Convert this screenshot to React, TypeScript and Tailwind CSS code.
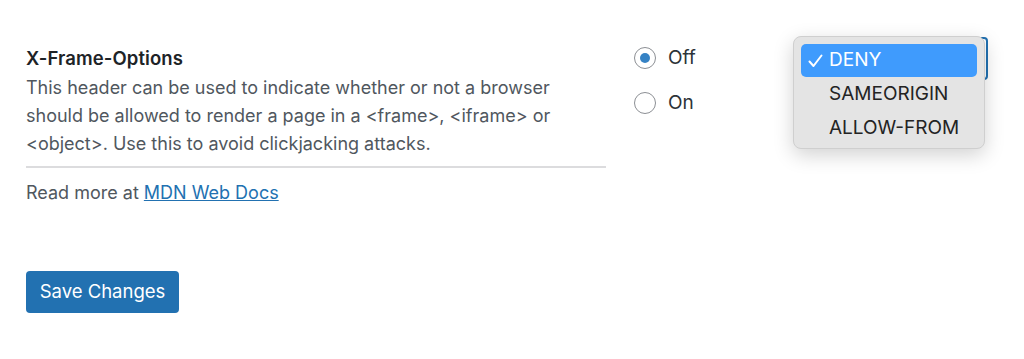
import React from "react";

export default function App() {
  const font = { fontFamily: "Inter, 'Noto Sans', Arial, sans-serif" };
  return (
    <div className="w-[1024px] h-[359px] bg-white overflow-hidden relative" style={font}>
      <div className="flex pl-[26px] pt-[46px]">
        <div className="w-[580px] flex flex-col">
          <div className="text-[18.5px] leading-[24px] font-semibold text-[#1d2327] tracking-[0.1px]">X-Frame-Options</div>
          <p className="mt-[4px] text-[18px] leading-[28px] text-[#50575e] pr-[20px]">
            This header can be used to indicate whether or not a browser should be allowed to render a page in a &lt;frame&gt;, &lt;iframe&gt; or &lt;object&gt;. Use this to avoid clickjacking attacks.
          </p>
          <div className="mt-[8px] h-[2px] bg-[#dcdcde]" />
          <p className="mt-[11px] text-[18px] leading-[28px] text-[#50575e]">
            Read more at <a className="text-[#2271b1] underline" href="#">MDN Web Docs</a>
          </p>
          <div className="mt-[64px]">
            <button className="h-[42px] w-[153px] rounded-[4px] bg-[#2271b1] text-white text-[18.5px]">Save Changes</button>
          </div>
        </div>
        <div className="ml-[28px] -mt-[35px] flex flex-col gap-[23px] pt-[36px]">
          <label className="flex items-center gap-[12px] h-[22px]">
            <span className="w-[22px] h-[22px] rounded-full border-[1.5px] border-[#8c8f94] flex items-center justify-center">
              <span className="w-[10px] h-[10px] rounded-full bg-[#3582c4]" />
            </span>
            <span className="text-[19px] text-[#2c3338]">Off</span>
          </label>
          <label className="flex items-center gap-[12px] h-[22px]">
            <span className="w-[22px] h-[22px] rounded-full border-[1.5px] border-[#8c8f94]" />
            <span className="text-[19px] text-[#2c3338]">On</span>
          </label>
        </div>
      </div>
      <div className="absolute left-[800px] top-[37px] w-[188px] h-[43px] rounded-[4px] border-2 border-[#2271b1] bg-white" />
      <div className="absolute left-[793px] top-[36px] w-[192px] h-[113px] rounded-[8px] bg-[#e4e4e4] border border-[#cfcfcf] shadow-[0_6px_20px_rgba(0,0,0,0.18)] px-[7px] pt-[7px]">
        <div className="h-[33px] rounded-[5px] bg-[#3f9bfd] flex items-center text-white text-[19px]">
          <span className="w-[28px] pl-[7px] flex items-center">
            <svg width="15" height="14" viewBox="0 0 15 14" fill="none">
              <path d="M1.5 7.5 L5.5 12 L13.5 1.5" stroke="white" strokeWidth="2" strokeLinecap="round" strokeLinejoin="round" />
            </svg>
          </span>
          <span>DENY</span>
        </div>
        <div className="h-[34px] flex items-center pl-[28px] text-[19px] text-[#232323]">SAMEORIGIN</div>
        <div className="h-[34px] flex items-center pl-[28px] text-[19px] text-[#232323]">ALLOW-FROM</div>
      </div>
    </div>
  );
}
